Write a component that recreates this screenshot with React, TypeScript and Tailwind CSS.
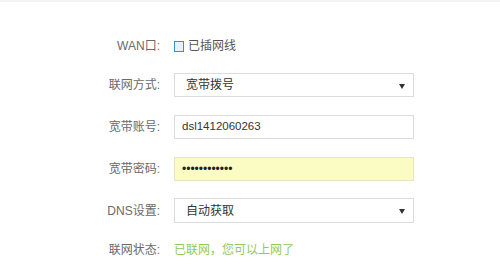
import React from "react";

const font = { fontFamily: '"Liberation Sans", "Noto Sans CJK SC", sans-serif' };

function Label({ children }: { children: React.ReactNode }) {
  return (
    <div className="w-[161px] shrink-0 text-right text-[12px] text-[#6a6a6a] pr-[1px]">{children}</div>
  );
}

function Arrow() {
  return (
    <svg width="6" height="5" viewBox="0 0 6 5" className="absolute right-[8px] top-[10px]">
      <path d="M0 0 L6 0 L3 5 Z" fill="#333" />
    </svg>
  );
}

export default function App() {
  return (
    <div className="w-[500px] h-[266px] bg-white overflow-hidden" style={font}>
      <div className="h-[2px] bg-[#f4f4f4]" />
      <div className="flex items-center h-[24px] mt-[32px]">
        <Label>WAN口:</Label>
        <div className="ml-[13px] flex items-center text-[12px] text-[#555]">
          <div className="w-[10px] h-[11px] border border-[#3b8ed0] bg-[#e6f1fa] mr-[4px]" />
          <span>已插网线</span>
        </div>
      </div>
      <div className="flex items-center h-[24px] mt-[15px]">
        <Label>联网方式:</Label>
        <div className="relative ml-[13px] w-[240px] h-[24px] border border-[#dcdcdc] bg-white flex items-center pl-[11px] text-[12px] text-[#333]">
          宽带拨号
          <Arrow />
        </div>
      </div>
      <div className="flex items-center h-[24px] mt-[18px]">
        <Label>宽带账号:</Label>
        <div className="ml-[13px] w-[240px] h-[24px] border border-[#dcdcdc] bg-white flex items-center pl-[7px] text-[11.5px] text-[#333]">
          dsl1412060263
        </div>
      </div>
      <div className="flex items-center h-[24px] mt-[18px]">
        <Label>宽带密码:</Label>
        <div className="ml-[13px] w-[240px] h-[24px] border border-[#e6e6bd] bg-[#fbfbc4] flex items-center pl-[7px] text-[12px] text-[#222]">
          ••••••••••••
        </div>
      </div>
      <div className="flex items-center h-[25px] mt-[17px]">
        <Label>DNS设置:</Label>
        <div className="relative ml-[13px] w-[240px] h-[25px] border border-[#dcdcdc] bg-white flex items-center pl-[11px] text-[12px] text-[#333]">
          自动获取
          <Arrow />
        </div>
      </div>
      <div className="flex items-center h-[24px] mt-[15px]">
        <Label>联网状态:</Label>
        <div className="ml-[13px] text-[12px] text-[#94c959]">已联网，您可以上网了</div>
      </div>
    </div>
  );
}
